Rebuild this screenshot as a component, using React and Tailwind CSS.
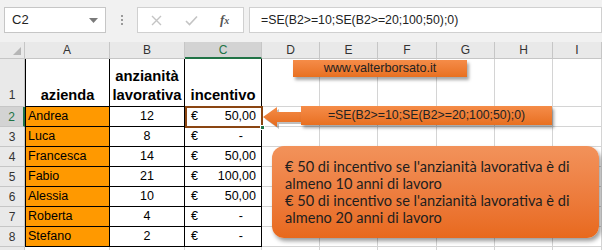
import React from "react";

const cols = [
  { k: "", w: "w-[25px]" },
  { k: "A", w: "w-[85px]" },
  { k: "B", w: "w-[75px]" },
  { k: "C", w: "w-[77px]" },
  { k: "D", w: "w-[58px]" },
  { k: "E", w: "w-[58px]" },
  { k: "F", w: "w-[59px]" },
  { k: "G", w: "w-[58px]" },
  { k: "H", w: "w-[58px]" },
  { k: "I", w: "w-[49px]" },
];

const rows = [
  { n: 2, name: "Andrea", years: 12, inc: "50,00" },
  { n: 3, name: "Luca", years: 8, inc: null },
  { n: 4, name: "Francesca", years: 14, inc: "50,00" },
  { n: 5, name: "Fabio", years: 21, inc: "100,00" },
  { n: 6, name: "Alessia", years: 10, inc: "50,00" },
  { n: 7, name: "Roberta", years: 4, inc: null },
  { n: 8, name: "Stefano", years: 2, inc: null },
];

function EmptyCells() {
  return (
    <>
      {cols.slice(4).map((c) => (
        <div key={c.k} className={`${c.w} shrink-0 border-r border-b border-[#d4d4d4]`} />
      ))}
    </>
  );
}

function FormulaBar() {
  return (
    <div className="h-[42px] bg-[#f1f1f1] flex items-start pt-[7px] pl-[4px]">
      <div className="w-[102px] h-[26px] bg-white border border-[#c6c6c6] flex items-center justify-between pl-[7px] pr-[7px]">
        <span className="text-[13px] text-[#222]">C2</span>
        <svg width="9" height="5" viewBox="0 0 9 5">
          <path d="M0 0 L9 0 L4.5 5 Z" fill="#7a7a7a" />
        </svg>
      </div>
      <div className="w-[31px] h-[26px] flex flex-col items-center justify-center gap-[2px]">
        <span className="w-[2px] h-[2px] bg-[#9a9a9a]" />
        <span className="w-[2px] h-[2px] bg-[#9a9a9a]" />
        <span className="w-[2px] h-[2px] bg-[#9a9a9a]" />
      </div>
      <div className="w-[107px] h-[26px] bg-white border border-[#d0d0d0] flex items-center">
        <svg className="ml-[13px]" width="11" height="11" viewBox="0 0 11 11">
          <path d="M1 1 L10 10 M10 1 L1 10" stroke="#c4c4c4" strokeWidth="1.4" />
        </svg>
        <svg className="ml-[23px]" width="13" height="11" viewBox="0 0 13 11">
          <path d="M1 6 L4.5 9.5 L12 1.5" stroke="#c4c4c4" strokeWidth="1.6" fill="none" />
        </svg>
        <span className="ml-[22px] text-[13px] italic text-[#555] font-['Liberation_Serif'] font-bold">
          f<span className="text-[10px]">x</span>
        </span>
      </div>
      <div className="ml-[5px] flex-1 h-[26px] bg-white border border-[#d0d0d0] flex items-center pl-[11px]">
        <span className="text-[12.3px] text-[#222]">=SE(B2&gt;=10;SE(B2&gt;=20;100;50);0)</span>
      </div>
    </div>
  );
}

export default function App() {
  return (
    <div className="w-[602px] h-[250px] overflow-hidden relative bg-white font-['Liberation_Sans',Arial,sans-serif] text-black">
      <FormulaBar />

      {/* column headers */}
      <div className="flex h-[17px] bg-[#e9e9e9]">
        {cols.map((c) =>
          c.k === "" ? (
            <div key="corner" className={`${c.w} shrink-0 border-r border-b border-[#c6c6c6] relative`}>
              <svg className="absolute right-[3px] bottom-[3px]" width="8" height="8" viewBox="0 0 8 8">
                <path d="M8 0 L8 8 L0 8 Z" fill="#b6b6b6" />
              </svg>
            </div>
          ) : (
            <div
              key={c.k}
              className={`${c.w} shrink-0 flex items-center justify-center text-[12px] border-r border-[#c6c6c6] ${
                c.k === "C"
                  ? "bg-[#d3d3d3] text-[#217346] border-b-2 border-b-[#217346]"
                  : "text-[#333] border-b border-b-[#c6c6c6]"
              }`}
            >
              {c.k}
            </div>
          )
        )}
      </div>

      {/* row 1 */}
      <div className="flex h-[48px]">
        <div className="w-[25px] shrink-0 bg-[#e9e9e9] border-r border-b border-[#c6c6c6] flex items-end justify-center pb-[2px] text-[12px] text-[#333]">
          1
        </div>
        <div className="w-[85px] shrink-0 border border-t-0 border-black flex items-end justify-center font-bold text-[14.6px] leading-[19px] pb-[1px]">
          azienda
        </div>
        <div className="w-[75px] shrink-0 border-r border-b border-black flex items-end justify-center text-center font-bold text-[14.8px] leading-[19px] pb-[1px]">
          anzianità
          <br />
          lavorativa
        </div>
        <div className="w-[77px] shrink-0 border-r border-b border-black flex items-end justify-center font-bold text-[14.8px] leading-[19px] pb-[1px]">
          incentivo
        </div>
        <EmptyCells />
      </div>

      {rows.map((r) => (
        <div key={r.n} className="flex h-[20px]">
          <div
            className={`w-[25px] shrink-0 border-b border-[#c6c6c6] flex items-center justify-center text-[12px] ${
              r.n === 2
                ? "bg-[#d3d3d3] text-[#217346] border-r-2 border-r-[#217346]"
                : "bg-[#e9e9e9] text-[#333] border-r"
            }`}
          >
            {r.n}
          </div>
          <div className="w-[85px] shrink-0 bg-[#ff9900] border-x border-b border-black flex items-center pl-[2px] text-[12.5px]">
            {r.name}
          </div>
          <div className="w-[75px] shrink-0 border-r border-b border-black flex items-center justify-center text-[12.5px]">
            {r.years}
          </div>
          <div className="w-[77px] shrink-0 border-r border-b border-black flex items-center justify-between pl-[6px] text-[12.5px]">
            <span>€</span>
            {r.inc ? <span className="pr-[5px]">{r.inc}</span> : <span className="pr-[18px]">-</span>}
          </div>
          <EmptyCells />
        </div>
      ))}

      <div className="flex h-[20px]">
        <div className="w-[25px] shrink-0 bg-[#e9e9e9] border-r border-[#c6c6c6]" />
        <div className="w-[85px] shrink-0 border-r border-[#d4d4d4]" />
        <div className="w-[75px] shrink-0 border-r border-[#d4d4d4]" />
        <div className="w-[77px] shrink-0 border-r border-[#d4d4d4]" />
        <EmptyCells />
      </div>

      {/* shape outline around C2 */}
      <div className="absolute left-[185px] top-[106px] w-[78px] h-[22px] border-2 border-[#8a4512]" />
      <div className="absolute left-[260px] top-[125px] w-[5px] h-[5px] bg-[#217346] border border-white" />

      {/* banner */}
      <div className="absolute left-[293px] top-[60px] w-[174px] h-[17px] bg-gradient-to-b from-[#f58c48] to-[#e8701f] shadow-[2px_3px_3px_rgba(0,0,0,0.35)] flex items-center justify-center text-[12.6px] text-[#222]">
        www.valterborsato.it
      </div>

      {/* arrow */}
      <svg className="absolute left-[262px] top-[104px]" width="42" height="28" viewBox="0 0 42 28">
        <defs>
          <linearGradient id="ag" x1="0" y1="0" x2="0" y2="1">
            <stop offset="0" stopColor="#f48c48" />
            <stop offset="1" stopColor="#e56a1c" />
          </linearGradient>
        </defs>
        <path d="M3 15 L17 5 L17 10 L42 10 L42 20 L17 20 L17 25 Z" fill="rgba(0,0,0,0.25)" />
        <path d="M1 13 L15 3 L15 8 L40 8 L40 18 L15 18 L15 23 Z" fill="url(#ag)" />
      </svg>

      {/* formula callout */}
      <div className="absolute left-[301px] top-[106px] w-[251px] h-[19px] bg-gradient-to-b from-[#f58c48] to-[#e8701f] shadow-[2px_3px_3px_rgba(0,0,0,0.35)] flex items-center justify-center text-[12.3px] text-[#222]">
        =SE(B2&gt;=10;SE(B2&gt;=20;100;50);0)
      </div>

      {/* note box */}
      <div className="absolute left-[272px] top-[146px] w-[327px] h-[92px] rounded-[12px] bg-gradient-to-b from-[#f2925a] to-[#e8691c] shadow-[2px_3px_4px_rgba(0,0,0,0.4)] flex flex-col justify-center pl-[13px] font-['Lato',sans-serif] text-[14.6px] leading-[17px] text-[#1e1e1e]">
        <div>€ 50 di incentivo se l'anzianità lavorativa è di</div>
        <div>almeno 10 anni di lavoro</div>
        <div>€ 50 di incentivo se l'anzianità lavorativa è di</div>
        <div>almeno 20 anni di lavoro</div>
      </div>
    </div>
  );
}
